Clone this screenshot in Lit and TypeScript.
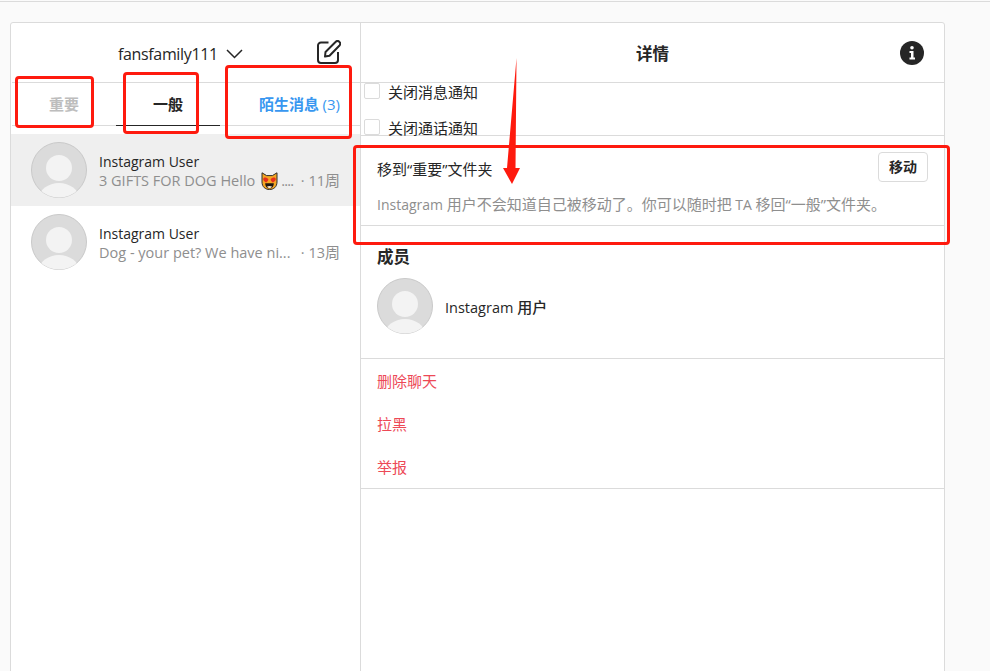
import { LitElement, html, css, svg } from "lit";
import { customElement } from "lit/decorators.js";

const avatar = (size: number) => html`<svg class="avatar" width=${size} height=${size} viewBox="0 0 56 56">
  <defs><clipPath id="av"><circle cx="28" cy="28" r="27.5"/></clipPath></defs>
  <circle cx="28" cy="28" r="27.5" fill="#dbdbdb" stroke="#c9c9c9" stroke-width="1"/>
  <g clip-path="url(#av)">
    <circle cx="28" cy="26" r="13" fill="#f3f3f3"/>
    <ellipse cx="28" cy="56" rx="20" ry="15" fill="#f3f3f3"/>
  </g>
</svg>`;

const emoji = svg`<svg class="emoji" width="17" height="18" viewBox="0 0 17 18">
  <path d="M1 .8 L5.6 3.6 H11.4 L16 .8 L16 10 C16 15 12.5 17.5 8.5 17.5 C4.5 17.5 1 15 1 10 Z" fill="#f5a623" stroke="#2e2e2e" stroke-width="1"/>
  <path d="M2.2 7 C2.2 5 5.6 4.8 7.4 7 C7.4 9 5.2 10.6 5.2 10.6 C5.2 10.6 2.2 9 2.2 7 Z M9.6 7 C11.4 4.8 14.8 5 14.8 7 C14.8 9 11.8 10.6 11.8 10.6 C11.8 10.6 9.6 9 9.6 7 Z" fill="#e5301f"/>
  <path d="M4.2 11.2 H12.8 C12.8 14.8 10.5 16.4 8.5 16.4 C6.5 16.4 4.2 14.8 4.2 11.2 Z" fill="#1f1612"/>
  <path d="M6 14.6 C7 13.8 10 13.8 11 14.6 C10.4 15.8 9.4 16.2 8.5 16.2 C7.6 16.2 6.6 15.8 6 14.6 Z" fill="#f6e6cc"/>
</svg>`;

@customElement("app-root")
export class AppRoot extends LitElement {
  static styles = css`
    :host {
      display: block;
      height: 671px;
      overflow: hidden;
      position: relative;
      background: #fafafa;
      box-sizing: border-box;
      padding-top: 1px;
      font-family: "Open Sans", "Noto Sans CJK SC", sans-serif;
      font-size: 14px;
      color: #262626;
    }
    .zh { font-size: 15px; }
    .topline { height: 1px; background: #dbdbdb; }
    .card {
      margin: 20px 0 0 10px;
      width: 935px;
      height: 700px;
      box-sizing: border-box;
      background: #fff;
      border: 1px solid #dbdbdb;
      border-radius: 3px;
      display: flex;
    }
    .left {
      width: 349px;
      flex: none;
      border-right: 1px solid #dbdbdb;
    }
    .right { flex: 1; min-width: 0; }
    .lhead {
      height: 59px;
      display: flex;
      align-items: center;
      border-bottom: 1px solid #dbdbdb;
      margin-left: 1px;
    }
    .account {
      margin-left: 106px;
      font-size: 16px;
      letter-spacing: -0.35px;
      line-height: 20px;
      display: flex;
      align-items: center;
      gap: 8px;
      margin-top: 2px;
    }
    .compose { margin-left: 74px; margin-top: -2px; display: block; }
    .tabs {
      display: flex;
      height: 42px;
      border-bottom: 1px solid #dbdbdb;
      margin-left: 1px;
      font-size: 14px;
      font-weight: 600;
    }
    .tab {
      width: 104px;
      text-align: center;
      line-height: 42px;
      color: #bdbdbd;
      position: relative;
    }
    .tab.active { color: #262626; }
    .tab.active::after {
      content: "";
      position: absolute;
      left: 0;
      right: 0;
      bottom: -1px;
      height: 1px;
      background: #262626;
    }
    .tab.req {
      flex: 1;
      text-align: right;
      padding-right: 20px;
      color: #3897f0;
      white-space: nowrap;
    }
    .tab.req .num { font-weight: 400; font-size: 15px; }
    .list { padding-top: 8px; }
    .row {
      height: 72px;
      display: flex;
      align-items: center;
      padding: 0 20px;
      gap: 12px;
      box-sizing: border-box;
    }
    .row.sel { background: #efefef; }
    .avatar { flex: none; display: block; }
    .rtext { flex: 1; min-width: 0; line-height: 19px; margin-top: 2px; }
    .rname { font-size: 14px; white-space: nowrap; }
    .rsub {
      display: flex;
      color: #8e8e8e;
      font-size: 14.5px;
      white-space: nowrap;
      justify-content: space-between;
      align-items: center;
    }
    .rsub .msg { display: flex; align-items: center; gap: 6px; }
    .rsub .dots { margin-left: -3px; letter-spacing: -0.8px; }
    .emoji { display: block; }
    .rhead {
      height: 59px;
      display: flex;
      align-items: center;
      border-bottom: 1px solid #dbdbdb;
      padding-right: 20px;
    }
    .rhead .title {
      flex: 1;
      text-align: center;
      font-size: 16.5px;
      font-weight: 600;
      margin-left: 44px;
    }
    .info { display: block; }
    .checks {
      height: 52px;
      border-bottom: 1px solid #dbdbdb;
      padding-left: 3px;
    }
    .check {
      display: flex;
      align-items: flex-start;
      height: 36px;
      gap: 8px;
      font-size: 15px;
    }
    .box {
      width: 14px;
      height: 14px;
      border: 1px solid #dbdbdb;
      border-radius: 2px;
      flex: none;
      background: #fff;
    }
    .check span:last-child { line-height: 18px; }
    .move {
      height: 90px;
      box-sizing: border-box;
      border-bottom: 1px solid #dbdbdb;
      padding: 16px 16px 0;
    }
    .mtop { display: flex; justify-content: space-between; align-items: center; }
    .mtop .zh { margin-top: 2px; }
    .btn {
      width: 50px;
      height: 30px;
      box-sizing: border-box;
      border: 1px solid #dbdbdb;
      border-radius: 4px;
      text-align: center;
      line-height: 28px;
      font-weight: 600;
      background: #fff;
    }
    .mdesc { color: #8e8e8e; margin-top: 12px; line-height: 20px; white-space: nowrap; }
    .members {
      height: 133px;
      box-sizing: border-box;
      padding: 20px 16px 0;
      border-bottom: 1px solid #dbdbdb;
    }
    .members h3 {
      margin: 0 0 10px;
      font-size: 16.5px;
      line-height: 22px;
      font-weight: 600;
    }
    .member { display: flex; align-items: center; gap: 12px; font-weight: 500; }
    .member .latin { font-size: 14.5px; }
    .actions {
      height: 130px;
      box-sizing: border-box;
      border-bottom: 1px solid #dbdbdb;
      color: #ed4956;
      font-size: 15px;
      padding: 1px 0 0 16px;
    }
    .actions div { height: 43px; line-height: 43px; }
    .marks {
      position: absolute;
      left: 0;
      top: 0;
      pointer-events: none;
    }
  `;

  render() {
    return html`
      <div class="topline"></div>
      <div class="card">
        <div class="left">
          <div class="lhead">
            <div class="account">fansfamily111
              <svg width="17" height="10" viewBox="0 0 17 10"><path d="M1 1 L8.5 8.5 L16 1" fill="none" stroke="#262626" stroke-width="1.5"/></svg>
            </div>
            <svg class="compose" width="24" height="24" viewBox="0 0 24 24" fill="none" stroke="#262626" stroke-width="2">
              <path d="M11.5 2.5 H4 A3 3 0 0 0 1 5.5 V20 A3 3 0 0 0 4 23 H18 A3 3 0 0 0 21 20 V12"/>
              <path d="M8.5 12 L18.5 2 A2 2 0 0 1 22.5 5.5 L12.5 15.8 L8 16.5 Z" stroke-linejoin="round"/>
            </svg>
          </div>
          <div class="tabs">
            <div class="tab zh">重要</div>
            <div class="tab zh active">一般</div>
            <div class="tab req"><span class="zh">陌生消息</span> <span class="num">(3)</span></div>
          </div>
          <div class="list">
            <div class="row sel">
              ${avatar(56)}
              <div class="rtext">
                <div class="rname">Instagram User</div>
                <div class="rsub"><span class="msg">3 GIFTS FOR DOG Hello ${emoji}<span class="dots">....</span></span><span>· 11<span class="zh">周</span></span></div>
              </div>
            </div>
            <div class="row">
              ${avatar(56)}
              <div class="rtext">
                <div class="rname">Instagram User</div>
                <div class="rsub"><span class="msg">Dog - your pet? We have ni...</span><span>· 13<span class="zh">周</span></span></div>
              </div>
            </div>
          </div>
        </div>
        <div class="right">
          <div class="rhead">
            <div class="title">详情</div>
            <svg class="info" width="24" height="24" viewBox="0 0 24 24">
              <circle cx="12" cy="12" r="12" fill="#262626"/>
              <circle cx="12" cy="6.8" r="1.8" fill="#fff"/>
              <path d="M9.5 10 H13.5 V16.5 H15 V18.5 H9.5 V16.5 H11 V12 H9.5 Z" fill="#fff"/>
            </svg>
          </div>
          <div class="checks">
            <div class="check"><span class="box"></span><span>关闭消息通知</span></div>
            <div class="check"><span class="box"></span><span>关闭通话通知</span></div>
          </div>
          <div class="move">
            <div class="mtop"><span class="zh">移到“重要”文件夹</span><span class="btn">移动</span></div>
            <div class="mdesc">Instagram <span class="zh">用户不会知道自己被移动了。你可以随时把</span> TA <span class="zh">移回“一般”文件夹。</span></div>
          </div>
          <div class="members">
            <h3>成员</h3>
            <div class="member">${avatar(56)}<span class="latin">Instagram <span class="zh">用户</span></span></div>
          </div>
          <div class="actions">
            <div>删除聊天</div>
            <div>拉黑</div>
            <div>举报</div>
          </div>
        </div>
      </div>
      <svg class="marks" width="990" height="671" viewBox="0 0 990 671" fill="none" stroke="#fe1a0e" stroke-width="3">
        <rect x="16.5" y="77.5" width="76" height="49" rx="2.5"/>
        <rect x="124.5" y="73.5" width="73" height="59" rx="2.5"/>
        <rect x="226.5" y="66.5" width="124" height="71" rx="2.5"/>
        <rect x="354.5" y="146.5" width="594" height="97" rx="2.5"/>
        <path d="M516.5 58 L515.5 168 L520 168 L512 184 L503 168 L507 168 Z" fill="#fe1a0e" stroke="none"/>
      </svg>
    `;
  }
}
